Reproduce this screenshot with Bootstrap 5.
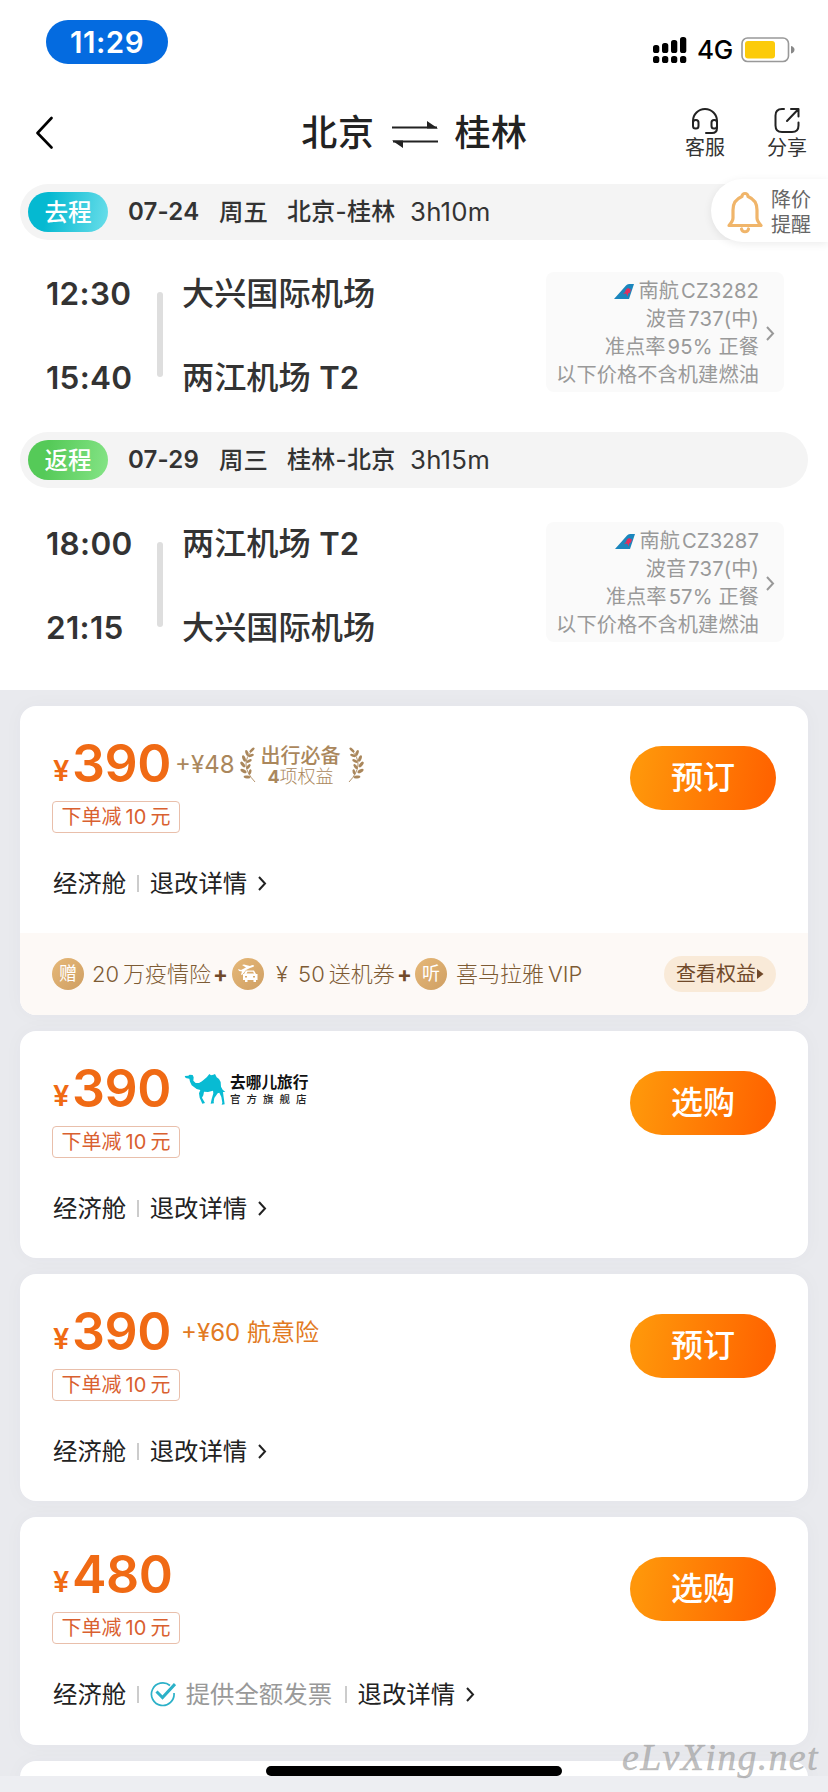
<!DOCTYPE html>
<html lang="zh-CN">
<head>
<meta charset="utf-8">
<meta name="viewport" content="width=device-width, initial-scale=1">
<title>北京 ⇌ 桂林</title>
<link href="https://cdn.jsdelivr.net/npm/bootstrap@5.3.0/dist/css/bootstrap.min.css" rel="stylesheet">
<style>
html, body { height: 1792px; overflow: hidden; }
body { font-family: Inter, "Noto Sans CJK SC", sans-serif; color: #222; background: #edeef2; line-height: 1; }
svg { display: block; flex: none; }
.screen { width: 828px; height: 1792px; overflow: hidden; }
.statusbar { height: 88px; padding: 20px 34px 0 46px; }
.clock { width: 122px; height: 44px; background: #046be0; font-size: 29.5px; font-weight: 600; color: #fff; letter-spacing: .5px; padding-top: 1px; }
.signals { margin-top: 16px; margin-right: -1px; }
.net { font-size: 26px; font-weight: 500; color: #000; letter-spacing: -.2px; margin: 0 8px 0 10px; }
.titlebar { height: 96px; padding: 0 20px 0 36px; }
.city { font-size: 36px; font-weight: 500; line-height: 40px; letter-spacing: .6px; }
.tool { width: 42px; font-size: 20px; line-height: 22px; color: #333; white-space: nowrap; }
.tool span { margin-top: 2px; }
.legbar { height: 56px; background: #f4f4f4; margin: 0 20px; padding-left: 8px; font-size: 24.4px; color: #333; white-space: pre; }
.legtag { width: 80px; height: 40px; color: #fff; font-size: 23.6px; font-weight: 500; margin-right: 20px; padding-top: 2px; }
.go { background: linear-gradient(100deg, #05b9d1 25%, #6adeea); }
.back { background: linear-gradient(100deg, #55ca58 25%, #85e486); }
.d-date { width: 91px; font-weight: 600; font-size: 24px; letter-spacing: .2px; }
.d-week { width: 68px; font-weight: 500; }
.d-route { width: 123px; font-weight: 500; font-size: 24px; letter-spacing: .3px; }
.d-dur { font-size: 25.8px; letter-spacing: .2px; }
.leg { height: 192px; padding: 32px 44px 0 46px; }
.times { width: 111px; font-size: 31.5px; font-weight: 600; color: #333; letter-spacing: .3px; }
.times div, .ports div { height: 43px; line-height: 43px; }
.times div + div, .ports div + div { margin-top: 41px; }
.rule { width: 6px; height: 85px; border-radius: 3px; background: #dedede; margin: 20px 19px 0 0; }
.ports { font-size: 32.2px; font-weight: 500; color: #333; }
.ports b { font-weight: 600; font-size: 31px; }
.meta { width: 238px; height: 120px; border-radius: 8px; background: #fafafa; color: #999; font-size: 20.2px; padding: 6px 9px 4px 0; letter-spacing: .1px; }
.meta .ln { height: 28px; line-height: 28px; white-space: nowrap; }
.meta .next { margin-left: 7px; }
.num { letter-spacing: .15px; padding-left: 2px; }
.alert-tab { position: absolute; right: 0; top: 179px; width: 117px; height: 63px; border-radius: 32px 0 0 32px; background: #fff; box-shadow: 0 2px 8px rgba(0,0,0,.08); font-size: 20px; line-height: 24.500px; color: #666; padding: 4px 0 0 16px; }
.deals { height: 1086px; padding: 16px 20px 0; background: #e9eaee; overflow: hidden; }
.deal { height: 227px; border: 0; border-radius: 16px; margin-bottom: 16px; box-shadow: 0 0 20px rgba(30,40,80,.03); overflow: hidden; }
.deal.tall { height: 309px; }
.deal.last { margin-bottom: 0; }
.main { height: 227px; padding: 32px 32px 0; flex: none; }
.price { color: #f06a14; height: 52px; }
.yen { font-size: 29px; font-weight: 600; width: 20px; padding: 13px 0 0 1px; }
.amount { font-size: 51.8px; font-weight: 600; letter-spacing: -.4px; margin-top: 0; }
.extra { font-size: 24px; white-space: nowrap; }
.gold { color: #aa875c; padding-top: 2px; }
.ben { margin: 1px 6px 0 4px; }
.tagoff { width: 128px; height: 32px; border: 1px solid #e9bfab; border-radius: 4px; color: #d9602f; font-size: 20px; margin-top: 11px; white-space: nowrap; }
.info { font-size: 24.4px; color: #222; height: 34px; margin-top: 33px; padding-left: 1px; }
.sep { width: 1.5px; height: 17px; background: #ccc; margin: 0 11px 0 11px; }
.info .next { margin-left: 11px; }
.book { width: 146px; height: 64px; border: 0; color: #fff; font-size: 32px; font-weight: 500; background: linear-gradient(100deg, #ff960a 8%, #ff6400 92%); padding: 0; line-height: 64px; }
.perks { height: 82px; background: #fdf9f6; padding: 0 32px; font-size: 22px; font-weight: 300; color: #7d5b34; flex: none; margin-top: auto; white-space: pre; }
.perks b { font-weight: 700; color: #70492a; }
.dot { width: 32px; height: 32px; background: linear-gradient(135deg, #e6b878, #cf9f63); color: #fff; font-size: 18px; font-weight: 400; }
.more { width: 112px; height: 36px; background: #f9ead8; color: #70492a; font-size: 20px; font-weight: 400; }
.brand1 { font-size: 15.7px; font-weight: 700; color: #111; line-height: 20px; padding-top: 1px; }
.brand2 { font-size: 10.500px; font-weight: 500; color: #222; line-height: 13px; letter-spacing: 6px; }
.homebar { position: absolute; left: 266px; top: 1766px; width: 296px; height: 10px; border-radius: 5px; background: #000; }
.watermark { position: absolute; left: 622px; top: 1729px; font: italic 400 38px/56px "Liberation Serif", serif; color: rgba(150,150,150,.6); letter-spacing: 1.3px; -webkit-text-stroke: .5px rgba(150,150,150,.5); }
</style>
</head>
<body>
<svg width="0" height="0" class="position-absolute">
  <defs>
    <g id="laurel" fill="currentColor">
      <path d="M13 3Q-2 17 15 35" fill="none" stroke="currentColor" stroke-width=".9"/>
      <ellipse cx="12" cy="3" rx="3.200" ry="1.300" transform="rotate(-40 12 3)"/>
      <ellipse cx="7" cy="6" rx="3.200" ry="1.500" transform="rotate(-110 7 6)"/>
      <ellipse cx="11" cy="8.500" rx="3" ry="1.400" transform="rotate(-20 11 8.500)"/>
      <ellipse cx="4" cy="11.500" rx="3.400" ry="1.600" transform="rotate(70 4 11.500)"/>
      <ellipse cx="9" cy="14" rx="3" ry="1.400" transform="rotate(-25 9 14)"/>
      <ellipse cx="2.800" cy="17.500" rx="3.400" ry="1.600" transform="rotate(50 2.800 17.500)"/>
      <ellipse cx="8.500" cy="19.500" rx="2.800" ry="1.400" transform="rotate(-50 8.500 19.500)"/>
      <ellipse cx="3.500" cy="24" rx="3.400" ry="1.600" transform="rotate(30 3.500 24)"/>
      <ellipse cx="10" cy="25" rx="2.800" ry="1.400" transform="rotate(-75 10 25)"/>
      <ellipse cx="7" cy="30" rx="3.400" ry="1.500" transform="rotate(8 7 30)"/>
    </g>
    <g id="tail"><path d="M0 15 12 1.500Q13 0 15 0H20L15 15Z" fill="#1b86bd"/><path d="M12 5.500l2-1.500 3 1.500-1 3-2 1v3l-2-3-3 .5 2-2z" fill="#e0305f"/></g>
    <path id="chev" d="M1 1 7 7.500 1 14" fill="none" stroke="currentColor" stroke-width="2"/>
  </defs>
</svg>
<div class="screen position-relative">
  <header class="bg-white">
    <div class="statusbar d-flex justify-content-between align-items-start">
      <div class="clock rounded-pill d-flex align-items-center justify-content-center">11:29</div>
      <div class="signals d-flex align-items-center">
        <svg width="34" height="28" viewBox="0 0 34 28"><g fill="#000"><rect x="0" y="9" width="6.300" height="8" rx="2.600"/><rect x="9" y="7" width="6.300" height="10" rx="2.600"/><rect x="18" y="4" width="6.300" height="13" rx="2.600"/><rect x="27" y="1" width="6.300" height="16" rx="2.600"/><rect x="0" y="20" width="6.300" height="7" rx="2.600"/><rect x="9" y="20" width="6.300" height="7" rx="2.600"/><rect x="18" y="20" width="6.300" height="7" rx="2.600"/><rect x="27" y="20" width="6.300" height="7" rx="2.600"/></g></svg>
        <span class="net">4G</span>
        <svg width="54" height="26" viewBox="0 0 54 26"><rect x="1" y="1" width="46.500" height="23.500" rx="5.500" fill="none" stroke="#999" stroke-width="1.600"/><rect x="4" y="4" width="30" height="17.500" rx="3" fill="#fccb0a"/><path d="M50 9q3.500 1 3.500 3.800T50 16.600z" fill="#888"/></svg>
      </div>
    </div>
    <div class="titlebar d-flex align-items-start">
      <svg width="18" height="34" viewBox="0 0 18 34" style="margin-top:28px"><path d="M15.500 2 1.500 17 15.500 31.500" fill="none" stroke="#000" stroke-width="2.600" stroke-linecap="round" stroke-linejoin="round"/></svg>
      <div class="d-flex align-items-center ms-auto me-auto" style="padding-left:91px;margin-top:25px">
        <span class="city">北京</span>
        <svg width="46" height="28" viewBox="0 0 46 28" style="margin:4px 17px 0 17px"><path d="M0 6.500H45M1 20.500H46" stroke="#222" stroke-width="2.200"/><path d="M35 0 46 7.500H35ZM11 27 0 19.500H11Z" fill="#222"/></svg>
        <span class="city">桂林</span>
      </div>
      <div class="d-flex" style="margin-top:19px;gap:40px">
        <div class="tool d-flex flex-column align-items-center">
          <svg width="28" height="28" viewBox="0 0 28 28" fill="none" stroke="#222" stroke-width="2" stroke-linecap="round"><path d="M2 17V14a12 12 0 0 1 24 0v7q0 5-5 5h-6"/><rect x="2" y="13" width="5.500" height="8.500" rx="2.500"/><rect x="20.500" y="13" width="5.500" height="8.500" rx="2.500"/></svg>
          <span>客服</span>
        </div>
        <div class="tool d-flex flex-column align-items-center">
          <svg width="26" height="28" viewBox="0 0 26 28" fill="none" stroke="#222" stroke-width="2" stroke-linecap="round" stroke-linejoin="round"><path d="M10 2H8Q1.500 2 1.500 8.500v10q0 6.500 6.500 6.500h10q6.500 0 6.500-6.500v-3M13 14 24 2.500M17 2h7.500v7.500"/></svg>
          <span>分享</span>
        </div>
      </div>
    </div>
  </header>
  <main class="bg-white" style="height:506px">
    <div class="legbar rounded-pill d-flex align-items-center">
      <span class="legtag go rounded-pill d-flex align-items-center justify-content-center">去程</span><span class="d-date">07-24</span><span class="d-week">周五</span><span class="d-route">北京-桂林</span><span class="d-dur">3h10m</span>
    </div>
    <section class="leg d-flex">
      <div class="times"><div>12:30</div><div>15:40</div></div>
      <div class="rule"></div>
      <div class="ports"><div>大兴国际机场</div><div>两江机场 <b>T2</b></div></div>
      <div class="meta ms-auto d-flex align-items-center justify-content-end">
        <div class="text-end">
          <div class="ln d-flex align-items-center justify-content-end"><svg width="20" height="15"><use href="#tail"/></svg><span class="ps-1">南航<span class="num">CZ3282</span></span></div>
          <div class="ln">波音<span class="num">737(</span>中)</div>
          <div class="ln">准点率<span class="num">95%</span> 正餐</div>
          <div class="ln">以下价格不含机建燃油</div>
        </div>
        <svg class="next" width="9" height="15"><use href="#chev"/></svg>
      </div>
    </section>
    <div class="legbar rounded-pill d-flex align-items-center">
      <span class="legtag back rounded-pill d-flex align-items-center justify-content-center">返程</span><span class="d-date">07-29</span><span class="d-week">周三</span><span class="d-route">桂林-北京</span><span class="d-dur">3h15m</span>
    </div>
    <section class="leg d-flex" style="padding-top:34px">
      <div class="times"><div>18:00</div><div>21:15</div></div>
      <div class="rule"></div>
      <div class="ports"><div>两江机场 <b>T2</b></div><div>大兴国际机场</div></div>
      <div class="meta ms-auto d-flex align-items-center justify-content-end">
        <div class="text-end">
          <div class="ln d-flex align-items-center justify-content-end"><svg width="20" height="15"><use href="#tail"/></svg><span class="ps-1">南航<span class="num">CZ3287</span></span></div>
          <div class="ln">波音<span class="num">737(</span>中)</div>
          <div class="ln">准点率<span class="num">57%</span> 正餐</div>
          <div class="ln">以下价格不含机建燃油</div>
        </div>
        <svg class="next" width="9" height="15"><use href="#chev"/></svg>
      </div>
    </section>
  </main>
  <div class="deals">
    <article class="card deal tall">
      <div class="main d-flex justify-content-between align-items-start">
        <div>
          <div class="price d-flex align-items-center"><span class="yen">¥</span><span class="amount">390</span>
            <span class="extra gold d-flex align-items-center"><span style="padding-left:4px">+¥48</span>
              <svg style="margin-left:5px" width="17" height="37" viewBox="0 0 17 37"><use href="#laurel"/></svg>
              <span class="text-center ben"><span class="d-block" style="font-size:20px;font-weight:500;line-height:21px">出行必备</span><span class="d-block" style="font-size:18px;font-weight:300;line-height:19px"><b style="font-weight:700">4</b>项权益</span></span>
              <svg width="17" height="37" viewBox="0 0 17 37"><use href="#laurel" transform="matrix(-1 0 0 1 17 0)"/></svg>
            </span>
          </div>
          <div class="tagoff d-flex align-items-center justify-content-center">下单减<span class="px-1">10</span>元</div>
          <div class="info d-flex align-items-center">经济舱<span class="sep"></span>退改详情<svg class="next" width="10" height="15"><use href="#chev"/></svg></div>
        </div>
        <button class="btn book rounded-pill mt-2">预订</button>
      </div>
      <div class="perks d-flex align-items-center">
        <span class="dot rounded-circle d-flex align-items-center justify-content-center">赠</span><span style="width:127px;padding-left:8px">20<span style="padding-left:4px">万疫情险</span></span><b style="width:21px;padding-left:2px">+</b><span class="dot rounded-circle d-flex align-items-center justify-content-center"><svg width="22" height="20" viewBox="0 0 22 20"><path d="M1 5 4 6 9 3.500 5 1 7 .5 13 2q3-1.500 4-.5T13 4L9 6 5 11 4 10.500 5 7.500 2 7Z" fill="#fff"/><path d="M7 10 9 6.500h8L19 10h1.500v6H19v2h-2.500v-2h-6v2H8v-2H6v-6ZM9.500 9.500h7.500l-1-1.700h-5.500ZM8 12v1.500h2V12Zm8 0v1.500h2V12Z" fill="#fff" fill-rule="evenodd"/></svg></span><span style="width:132px;padding-left:12px">¥ <span style="padding-left:4px">50</span><span style="padding-left:4px">送机券</span></span><b style="width:19px;padding-left:1px">+</b><span class="dot rounded-circle d-flex align-items-center justify-content-center">听</span><span style="padding-left:9px">喜马拉雅<span style="padding-left:4px">VIP</span></span>
        <span class="more rounded-pill d-flex align-items-center justify-content-center ms-auto">查看权益<svg width="8" height="10"><path d="M1 0 7.500 5 1 10z" fill="#70492a"/></svg></span>
      </div>
    </article>
    <article class="card deal">
      <div class="main d-flex justify-content-between align-items-start">
        <div>
          <div class="price d-flex align-items-center"><span class="yen">¥</span><span class="amount">390</span>
            <svg style="margin-left:13px" width="42" height="33" viewBox="553 133 126 99"><path fill="#08bbd3" d="M555 142 566 141 570 138 579 139 582 146 581 156 588 163 598 163 607 158 615 151 622 145 629 136 634 140 641 138 646 136 651 146 658 151 663 160 664 174 669 183 677 190 670 190 672 206 675 227 666 228 668 222 665 205 659 192 654 194 644 208 642 219 643 224 633 225 636 211 641 194 640 186 625 190 613 189 611 200 607 207 616 223 608 225 600 207 598 194 602 184 591 181 576 170 571 159 569 150 558 148Z"/></svg>
            <span style="margin-left:4px"><span class="d-block brand1">去哪儿旅行</span><span class="d-block brand2">官方旗舰店</span></span>
          </div>
          <div class="tagoff d-flex align-items-center justify-content-center">下单减<span class="px-1">10</span>元</div>
          <div class="info d-flex align-items-center">经济舱<span class="sep"></span>退改详情<svg class="next" width="10" height="15"><use href="#chev"/></svg></div>
        </div>
        <button class="btn book rounded-pill mt-2">选购</button>
      </div>
    </article>
    <article class="card deal">
      <div class="main d-flex justify-content-between align-items-start">
        <div>
          <div class="price d-flex align-items-center"><span class="yen">¥</span><span class="amount">390</span><span class="extra" style="padding:2px 0 0 10px;color:#e27a22">+¥60 航意险</span></div>
          <div class="tagoff d-flex align-items-center justify-content-center">下单减<span class="px-1">10</span>元</div>
          <div class="info d-flex align-items-center">经济舱<span class="sep"></span>退改详情<svg class="next" width="10" height="15"><use href="#chev"/></svg></div>
        </div>
        <button class="btn book rounded-pill mt-2">预订</button>
      </div>
    </article>
    <article class="card deal" style="height:228px">
      <div class="main d-flex justify-content-between align-items-start">
        <div>
          <div class="price d-flex align-items-center"><span class="yen">¥</span><span class="amount">480</span></div>
          <div class="tagoff d-flex align-items-center justify-content-center">下单减<span class="px-1">10</span>元</div>
          <div class="info d-flex align-items-center">经济舱<span class="sep"></span><svg width="26" height="26" viewBox="0 0 26 26" fill="none" stroke="#2cb1c8"><path d="M20 4.500A11.300 11.300 0 1 0 24 12" stroke-width="1.700"/><path d="M6.500 10.500 12.500 16.500 25 3" stroke-width="3"/></svg><span style="color:#999;padding-left:10px">提供全额发票</span><span class="sep" style="margin-left:13px"></span>退改详情<svg class="next" width="10" height="15"><use href="#chev"/></svg></div>
        </div>
        <button class="btn book rounded-pill mt-2">选购</button>
      </div>
    </article>
    <article class="card deal last"></article>
  </div>
  <aside class="alert-tab d-flex align-items-center">
    <svg width="36" height="44" viewBox="0 0 36 44" fill="none" stroke="#f0b56a" stroke-width="3.200" stroke-linecap="round" stroke-linejoin="round"><path d="M15 5.500a3 3 0 0 1 6 0Q30 9 30 19v8q0 3 4 7.500H2Q6 30 6 27v-8Q6 9 15 5.500Z"/><path d="M14.500 38a3.600 3.600 0 0 0 7 0"/></svg>
    <span class="ms-2">降价<br>提醒</span>
  </aside>
  <div class="homebar"></div>
  <div class="watermark">eLvXing.net</div>
</div>
<script src="https://cdn.jsdelivr.net/npm/bootstrap@5.3.0/dist/js/bootstrap.bundle.min.js"></script>
</body>
</html>
